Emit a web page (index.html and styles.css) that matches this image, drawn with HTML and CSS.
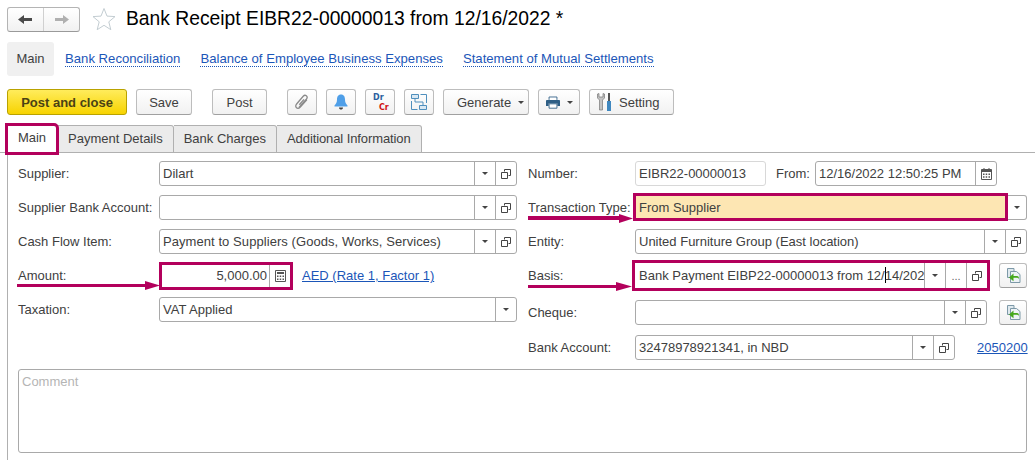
FILE: index.html
```html
<!DOCTYPE html>
<html lang="en">

<head>
    <meta charset="UTF-8">
    <title>Bank Receipt</title>
    <link rel="stylesheet" href="styles.css">
</head>

<body>
    <svg width="0" height="0" class="defs">
        <symbol id="open" viewBox="0 0 10 10"><path d="M3.500 2.500V.5h6v6h-2" fill="none" stroke="#444"/><path d="M.5 3.500h6v6h-6z" fill="#fff" stroke="#444"/></symbol>
        <symbol id="calc" viewBox="0 0 11 12"><path d="M.5.5h10v11H.5z" fill="none" stroke="#555"/><path d="M2 2h7v2H2zM2 5.500h1.500V7H2zM4.700 5.500h1.500V7H4.700zM7.500 5.500H9V7H7.500zM2 8.500h1.500V10H2zM4.700 8.500h1.500V10H4.700zM7.500 8.500H9V10H7.500z" fill="#555"/></symbol>
        <symbol id="calendar" viewBox="0 0 11 12"><path d="M.5 1.500h10v10H.5z" fill="none" stroke="#555"/><path d="M.5 1.500h10V4H.5zM2.500 0h1v2h-1zM7.500 0h1v2h-1z" fill="#555"/><path d="M2 5.500h1.500V7H2zM4.700 5.500h1.500V7H4.700zM7.500 5.500H9V7H7.500zM2 8.200h1.500v1.500H2zM4.700 8.200h1.500v1.500H4.700zM7.500 8.200H9v1.500H7.500z" fill="#555"/></symbol>
        <symbol id="report" viewBox="0 0 15 15"><path d="M1.500.5h6.500v9h-6.500z" fill="#dfe9ee" stroke="#7d99a8"/><path d="M4.500 3.500h6l3.500 3v8H4.500z" fill="#eef3f6" stroke="#7d99a8"/><path d="M3 9.500 7.500 5.500V8H11c1.500 0 2 1 2 3-.8-1-1.500-1.200-2.500-1.200h-3v3.500z" fill="#45a81c"/></symbol>
    </svg>

    <div class="title-bar">
        <div class="history">
            <span class="history-btn">
                <svg width="15" height="11" viewBox="0 0 15 11"><path d="M0 5.500 6 1v3h8v3H6v3z" fill="#4a4a4a"/></svg>
            </span>
            <span class="history-btn">
                <svg width="15" height="11" viewBox="0 0 15 11"><path d="M15 5.500 9 1v3H1v3h8v3z" fill="#b0b0b0"/></svg>
            </span>
        </div>
        <svg class="star" width="24" height="24" viewBox="0 0 24 24"><path d="M12 1.500l3 7.600 8 .5-6.200 5.200 2 7.900L12 18.300 5.200 22.700l2-7.900L1 9.600l8-.5z" fill="#fff" stroke="#c3cdd2"/></svg>
        <h1>Bank Receipt EIBR22-00000013 from 12/16/2022 *</h1>
    </div>

    <div class="section-nav">
        <span class="section-current">Main</span>
        <a class="section-link" href="#">Bank Reconciliation</a>
        <a class="section-link" href="#">Balance of Employee Business Expenses</a>
        <a class="section-link" href="#">Statement of Mutual Settlements</a>
    </div>

    <div class="toolbar">
        <button class="btn btn-primary" type="button">Post and close</button>
        <button class="btn btn-save" type="button">Save</button>
        <button class="btn btn-post" type="button">Post</button>
        <button class="btn btn-icon" type="button">
            <svg width="16" height="16" viewBox="0 0 16 16"><path d="M5 13.500 12.500 5c1-1.300.7-2.500-.2-3.200-1-.8-2.200-.5-3.100.5L2.800 9.700c-1.500 1.800-1.300 3.200-.3 4 1 .9 2.500.7 3.800-.7l6.500-7.300M5.300 10.700 10 5.400" fill="none" stroke="#8a8a8a" stroke-width="1.300"/></svg>
        </button>
        <button class="btn btn-icon" type="button">
            <svg width="14" height="16" viewBox="0 0 14 16"><path d="M7 .5c3 0 4 2.500 4 5 0 3 1 4.500 2.500 6v1H.5v-1C2 10 3 8.500 3 5.500c0-2.500 1-5 4-5z" fill="#4f9fe8"/><path d="M5 13.500h4c0 1.500-1 2-2 2s-2-.5-2-2z" fill="#444"/></svg>
        </button>
        <button class="btn btn-icon btn-drcr" type="button">
            <span class="dr">Dr</span>
            <span class="cr">Cr</span>
        </button>
        <button class="btn btn-icon" type="button">
            <svg width="16" height="16" viewBox="0 0 16 16"><path d="M.5.500h7v4h-7zM8.500 11.500h7v4h-7z" fill="#d9e8f3" stroke="#4f8fbd"/><path d="M4 4.500V8h8V11.500M.5 7v8.500h6M15.500 9V.5h-6" fill="none" stroke="#4f8fbd"/></svg>
        </button>
        <button class="btn btn-generate" type="button">Generate<i class="caret"></i></button>
        <button class="btn btn-print" type="button">
            <svg width="14" height="13" viewBox="0 0 16 14"><path d="M3.500 4V.7h9V4" fill="#fff" stroke="#2f5f86"/><path d="M1 4h14a1 1 0 0 1 1 1v6h-3V8H3v3H0V5a1 1 0 0 1 1-1z" fill="#2f5f86"/><path d="M3.500 8.500h9v5h-9z" fill="#fff" stroke="#2f5f86"/></svg>
            <i class="caret"></i>
        </button>
        <button class="btn btn-setting" type="button">
            <svg width="15" height="18" viewBox="0 0 15 18"><path d="M.5 1v4L2.500 7v10h3V7l2-2V1L6 .5v3.500H2V.5z" fill="#c4c4c4" stroke="#777" stroke-width=".7"/><path d="M11 0h2v8h-2z" fill="#555"/><path d="M10 8h4v10h-4z" fill="#3f87bf"/></svg>
            Setting
        </button>
    </div>

    <div class="tabs">
        <span class="tab tab-active">Main</span>
        <span class="tab tab-payment">Payment Details</span>
        <span class="tab">Bank Charges</span>
        <span class="tab tab-info">Additional Information</span>
    </div>

    <div class="panel">
        <div class="columns">
            <div class="column column-left">
                <div class="row">
                    <label class="label">Supplier:</label>
                    <div class="field grow">
                        <span class="value">Dilart</span>
                        <span class="cell"><i class="caret"></i></span>
                        <span class="cell"><svg class="ico-open"><use href="#open"/></svg></span>
                    </div>
                </div>
                <div class="row">
                    <label class="label">Supplier Bank Account:</label>
                    <div class="field grow">
                        <span class="value"></span>
                        <span class="cell"><i class="caret"></i></span>
                        <span class="cell"><svg class="ico-open"><use href="#open"/></svg></span>
                    </div>
                </div>
                <div class="row">
                    <label class="label">Cash Flow Item:</label>
                    <div class="field grow">
                        <span class="value value-spaced">Payment to Suppliers (Goods, Works, Services)</span>
                        <span class="cell"><i class="caret"></i></span>
                        <span class="cell"><svg class="ico-open"><use href="#open"/></svg></span>
                    </div>
                </div>
                <div class="row">
                    <label class="label">Amount:</label>
                    <div class="field marked field-amount">
                        <span class="value value-num">5,000.00</span>
                        <span class="cell"><svg class="ico"><use href="#calc"/></svg></span>
                    </div>
                    <a class="link link-rate" href="#">AED (Rate 1, Factor 1)</a>
                </div>
                <div class="row">
                    <label class="label">Taxation:</label>
                    <div class="field grow">
                        <span class="value">VAT Applied</span>
                        <span class="cell"><i class="caret"></i></span>
                    </div>
                </div>
            </div>

            <div class="column column-right">
                <div class="row">
                    <label class="label">Number:</label>
                    <div class="field field-number">
                        <span class="value">EIBR22-00000013</span>
                    </div>
                    <label class="label-from">From:</label>
                    <div class="field field-date">
                        <span class="value">12/16/2022 12:50:25 PM</span>
                        <span class="cell"><svg class="ico"><use href="#calendar"/></svg></span>
                    </div>
                </div>
                <div class="row">
                    <label class="label">Transaction Type:</label>
                    <div class="field-type">
                        <span class="type-value">From Supplier</span>
                        <span class="cell type-cell"><i class="caret"></i></span>
                    </div>
                </div>
                <div class="row">
                    <label class="label">Entity:</label>
                    <div class="field grow">
                        <span class="value">United Furniture Group (East location)</span>
                        <span class="cell"><i class="caret"></i></span>
                        <span class="cell"><svg class="ico-open"><use href="#open"/></svg></span>
                    </div>
                </div>
                <div class="row">
                    <label class="label">Basis:</label>
                    <div class="field marked field-basis">
                        <span class="value value-basis">Bank Payment EIBP22-00000013 from 12/<i class="text-cursor"></i>14/202</span>
                        <span class="cell"><i class="caret"></i></span>
                        <span class="cell cell-dots">...</span>
                        <span class="cell"><svg class="ico-open"><use href="#open"/></svg></span>
                    </div>
                    <button class="btn btn-side" type="button"><svg width="15" height="15"><use href="#report"/></svg></button>
                </div>
                <div class="row row-cheque">
                    <label class="label">Cheque:</label>
                    <div class="field grow">
                        <span class="value"></span>
                        <span class="cell"><i class="caret"></i></span>
                        <span class="cell"><svg class="ico-open"><use href="#open"/></svg></span>
                    </div>
                    <button class="btn btn-side" type="button"><svg width="15" height="15"><use href="#report"/></svg></button>
                </div>
                <div class="row row-bank">
                    <label class="label">Bank Account:</label>
                    <div class="field field-bank">
                        <span class="value">32478978921341, in NBD</span>
                        <span class="cell"><i class="caret"></i></span>
                        <span class="cell"><svg class="ico-open"><use href="#open"/></svg></span>
                    </div>
                    <a class="link link-code" href="#">2050200</a>
                </div>
            </div>
        </div>

        <div class="comment">Comment</div>
    </div>

    <!-- annotation arrows drawn over the form -->
    <svg class="arrows" width="1035" height="460" viewBox="0 0 1035 460">
        <path d="M17 284h128v-3l15 4.500-15 4.500v-3H17z"/>
        <path d="M528 216h91v-2l14 4.500-14 4.500v-3h-91z"/>
        <path d="M528 285h88v-3l16 4.500-16 4.500v-3h-88z"/>
    </svg>
</body>

</html>
```

FILE: styles.css
```css
* {
    box-sizing: border-box;
}

body {
    margin: 0;
    height: 460px;
    overflow: hidden;
    position: relative;
    background: #fff;
    color: #404040;
    font-family: "Liberation Sans", Arial, sans-serif;
    font-size: 13px;
}

.defs {
    position: absolute;
}

/* title */
.title-bar {
    display: flex;
    align-items: center;
    height: 24px;
    margin: 7px 0 0 7px;
}

.history {
    display: flex;
    flex: none;
    width: 73px;
    height: 25px;
    border: 1px solid #b4b4b4;
    border-bottom-color: #9a9a9a;
    border-radius: 3px;
    background: linear-gradient(#fff, #f1f1f1);
}

.history-btn {
    flex: 1;
    display: flex;
    align-items: center;
    justify-content: center;
}

.history-btn + .history-btn {
    border-left: 1px solid #d0d0d0;
}

.star {
    margin-left: 12px;
}

h1 {
    margin: 0 0 0 10px;
    color: #000;
    font-size: 19.3px;
    font-weight: normal;
}

/* section links */
.section-nav {
    display: flex;
    align-items: center;
    height: 34px;
    margin: 11px 0 0 7px;
}

.section-current {
    width: 47px;
    height: 34px;
    line-height: 34px;
    text-align: center;
    border-radius: 3px;
    background: #f0f0f0;
    color: #404040;
}

.section-link {
    margin-left: 11px;
    margin-right: 9px;
    color: #1b56b8;
    font-size: 13.15px;
    text-decoration: none;
    border-bottom: 1px dotted #1b56b8;
}

/* command bar */
.toolbar {
    display: flex;
    height: 26px;
    margin: 13px 0 0 7px;
}

.btn {
    display: flex;
    align-items: center;
    justify-content: center;
    height: 26px;
    margin: 0 9px 0 0;
    padding: 0;
    border: 1px solid #bdbdbd;
    border-bottom-color: #a0a0a0;
    border-radius: 3px;
    background: linear-gradient(#fff, #f1f1f1);
    color: #404040;
    font-family: inherit;
    font-size: 13px;
}

.btn-primary {
    width: 120px;
    border-color: #b9a200;
    background: linear-gradient(#ffec5c, #f7d300);
    color: #4a4214;
    font-weight: bold;
}

.btn-save {
    width: 56px;
    margin-right: 20px;
}

.btn-post {
    width: 55px;
    margin-right: 20px;
}

.btn-icon {
    width: 30px;
}

.btn-drcr {
    display: block;
    position: relative;
    font-size: 8px;
    font-family: "DejaVu Sans", sans-serif;
    font-weight: bold;
}

.dr {
    position: absolute;
    left: 7px;
    top: 3px;
    color: #2a5f9e;
}

.cr {
    position: absolute;
    left: 13px;
    top: 13px;
    color: #d01010;
}

.btn-generate {
    width: 86px;
    justify-content: flex-start;
    padding-left: 13px;
}

.btn-print {
    width: 42px;
}

.btn-setting {
    width: 85px;
    justify-content: flex-start;
    gap: 7px;
    padding-left: 7px;
}

.caret {
    display: inline-block;
    width: 0;
    height: 0;
    border-left: 3px solid transparent;
    border-right: 3px solid transparent;
    border-top: 3px solid #444;
}

.btn-generate .caret,
.btn-print .caret {
    margin-left: 7px;
}

/* tabs */
.tabs {
    display: flex;
    height: 28px;
    margin-top: 10px;
    padding-left: 7px;
    border-bottom: 1px solid #b0b0b0;
}

.tab {
    height: 28px;
    padding: 0 10px;
    line-height: 26px;
    border: 1px solid #b0b0b0;
    border-left: 0;
    border-radius: 0 3px 0 0;
    background: #ebebeb;
    color: #404040;
    white-space: nowrap;
}

.tab-active {
    position: relative;
    z-index: 1;
    width: 50px;
    height: 28px;
    padding: 0;
    text-align: center;
    background: #fff;
    outline: 3px solid #b3005c;
    outline-offset: -1px;
    border: 0;
}

.tab-payment {
    padding-left: 11px;
}

.tab-info {
    width: 145px;
    letter-spacing: -.1px;
}

.panel {
    height: 308px;
    margin-left: 7px;
    padding: 8px 8px 0 10px;
    border-left: 1px solid #b0b0b0;
}

/* form */
.columns {
    display: flex;
    gap: 11px;
}

.column {
    width: 499px;
    display: flex;
    flex-direction: column;
    gap: 9px;
}

.row {
    display: flex;
    align-items: center;
    height: 25px;
}

.row-cheque {
    margin-top: 3px;
}

.row-bank {
    margin-top: 1px;
}

.label {
    flex: none;
    white-space: nowrap;
}

.column-left .label {
    width: 141px;
}

.column-right .label {
    width: 107px;
}

.label-from {
    width: 39px;
    margin-left: 10px;
}

.field {
    display: flex;
    flex: none;
    height: 25px;
    border: 1px solid #a9a9a9;
    border-radius: 3px;
    background: #fff;
}

.grow {
    flex: 1;
    min-width: 0;
}

.value {
    flex: 1;
    min-width: 0;
    padding-left: 3px;
    line-height: 23px;
    white-space: nowrap;
    overflow: hidden;
}

.value-spaced {
    letter-spacing: .066px;
}

.cell {
    flex: none;
    display: flex;
    align-items: center;
    justify-content: center;
    width: 21px;
    border-left: 1px solid #a9a9a9;
}

.ico {
    width: 11px;
    height: 12px;
}

.ico-open {
    width: 10px;
    height: 10px;
}

.marked {
    height: 31px;
    border: 3px solid #b3005c;
    border-radius: 0;
}

.field-amount {
    width: 134px;
    height: 28px;
}

.value-num {
    padding: 0 2px 0 0;
    line-height: 22px;
    text-align: right;
}

.link {
    color: #1b56b8;
}

.link-rate {
    margin-left: 9px;
}

.link-code {
    margin-left: 22px;
}

.field-number {
    width: 131px;
    border-color: #d8d8d8;
}

.field-date {
    width: 182px;
}

.field-type {
    display: flex;
    flex: 1;
    height: 25px;
    margin-left: -2px;
}

.type-value {
    flex: 1;
    height: 28px;
    margin-top: -2px;
    padding-left: 3px;
    line-height: 24px;
    border: 3px solid #b3005c;
    background: #fde6b3;
}

.type-cell {
    width: 19px;
    border: 1px solid #a9a9a9;
    border-left: 0;
    border-radius: 0 3px 3px 0;
}

.field-basis {
    width: 358px;
    margin-left: -3px;
    margin-right: 9px;
}

.value-basis {
    padding-left: 4px;
    line-height: 26px;
}

.text-cursor {
    display: inline-block;
    width: 1px;
    height: 16px;
    margin-right: -1px;
    vertical-align: -3px;
    background: #000;
}

.cell-dots {
    font-size: 11px;
    color: #666;
}

.btn-side {
    flex: none;
    width: 28px;
    height: 25px;
    margin: 0;
}

.row-cheque .field {
    margin-right: 12px;
}

.field-bank {
    width: 320px;
}

.comment {
    height: 84px;
    margin-top: 9px;
    padding: 4px 3px;
    border: 1px solid #a9a9a9;
    border-radius: 3px;
    color: #b5b5b5;
}

/* annotations */
.arrows {
    position: absolute;
    left: 0;
    top: 0;
    pointer-events: none;
}

.arrows path {
    fill: #b3005c;
}
```
